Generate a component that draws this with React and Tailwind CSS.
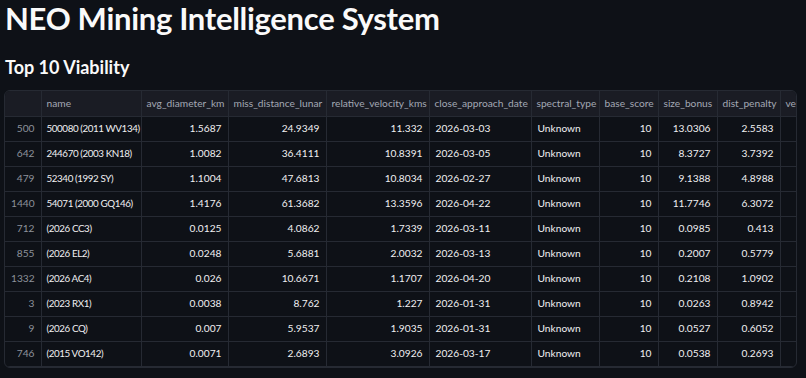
import React from "react";

const cols = [
  { key: "name", label: "name", w: 100, align: "left" },
  { key: "avg", label: "avg_diameter_km", w: 87, align: "right" },
  { key: "miss", label: "miss_distance_lunar", w: 98, align: "right" },
  { key: "rel", label: "relative_velocity_kms", w: 103, align: "right" },
  { key: "date", label: "close_approach_date", w: 102, align: "left" },
  { key: "spec", label: "spectral_type", w: 68, align: "left" },
  { key: "base", label: "base_score", w: 59, align: "right" },
  { key: "size", label: "size_bonus", w: 59, align: "right" },
  { key: "dist", label: "dist_penalty", w: 63, align: "right" },
  { key: "vel", label: "velocity_penalty", w: 100, align: "right" },
];

const rows = [
  ["500", "500080 (2011 WV134)", "1.5687", "24.9349", "11.332", "2026-03-03", "Unknown", "10", "13.0306", "2.5583", ""],
  ["642", "244670 (2003 KN18)", "1.0082", "36.4111", "10.8391", "2026-03-05", "Unknown", "10", "8.3727", "3.7392", ""],
  ["479", "52340 (1992 SY)", "1.1004", "47.6813", "10.8034", "2026-02-27", "Unknown", "10", "9.1388", "4.8988", ""],
  ["1440", "54071 (2000 GQ146)", "1.4176", "61.3682", "13.3596", "2026-04-22", "Unknown", "10", "11.7746", "6.3072", ""],
  ["712", "(2026 CC3)", "0.0125", "4.0862", "1.7339", "2026-03-11", "Unknown", "10", "0.0985", "0.413", ""],
  ["855", "(2026 EL2)", "0.0248", "5.6881", "2.0032", "2026-03-13", "Unknown", "10", "0.2007", "0.5779", ""],
  ["1332", "(2026 AC4)", "0.026", "10.6671", "1.1707", "2026-04-20", "Unknown", "10", "0.2108", "1.0902", ""],
  ["3", "(2023 RX1)", "0.0038", "8.762", "1.227", "2026-01-31", "Unknown", "10", "0.0263", "0.8942", ""],
  ["9", "(2026 CQ)", "0.007", "5.9537", "1.9035", "2026-01-31", "Unknown", "10", "0.0527", "0.6052", ""],
  ["746", "(2015 VO142)", "0.0071", "2.6893", "3.0926", "2026-03-17", "Unknown", "10", "0.0538", "0.2693", ""],
];

export default function App() {
  return (
    <div
      className="w-[806px] h-[378px] overflow-hidden bg-[#0e1117] text-[#fafafa]"
      style={{ fontFamily: "'Lato', 'Noto Sans', sans-serif" }}
    >
      <h1 className="pl-[5px] pt-[1px] text-[31px] leading-[34px] font-bold tracking-[-0.3px] text-[#fafafa]">
        NEO Mining Intelligence System
      </h1>
      <h2 className="pl-[5px] mt-[20px] text-[18px] leading-[24px] font-bold text-[#fafafa]">
        Top 10 Viability
      </h2>
      <div className="ml-[4px] mt-[11px] w-[793px] rounded-[6px] border border-[#262a33] overflow-hidden">
        <table
          className="table-fixed border-collapse text-[10.2px]"
          style={{ width: 36 + cols.reduce((a, c) => a + c.w, 0) }}
        >
          <colgroup>
            <col style={{ width: 36 }} />
            {cols.map((c) => (
              <col key={c.key} style={{ width: c.w }} />
            ))}
          </colgroup>
          <thead>
            <tr className="h-[25px] bg-[#1a1c24]">
              <th className="border-r border-b border-[#262a33]"></th>
              {cols.map((c) => (
                <th
                  key={c.key}
                  className="border-r border-b border-[#262a33] px-[5px] text-left font-normal text-[#a3a8b4] whitespace-nowrap overflow-hidden"
                >
                  {c.label}
                </th>
              ))}
            </tr>
          </thead>
          <tbody>
            {rows.map((r, i) => (
              <tr key={i} className="h-[25px]">
                <td className="border-r border-b border-[#262a33] px-[6px] text-right text-[#8d919b]">{r[0]}</td>
                {cols.map((c, j) => (
                  <td
                    key={c.key}
                    className={
                      c.key === "name"
                        ? "border-r border-b border-[#262a33] pl-[5px] pr-[1px] whitespace-nowrap overflow-hidden text-[#f0f0f2] text-left text-[9.8px] tracking-[-0.4px]"
                        : "border-r border-b border-[#262a33] px-[6px] whitespace-nowrap overflow-hidden text-[#f0f0f2] " +
                          (c.align === "right" ? "text-right" : "text-left")
                    }
                  >
                    {r[j + 1]}
                  </td>
                ))}
              </tr>
            ))}
          </tbody>
        </table>
      </div>
    </div>
  );
}
